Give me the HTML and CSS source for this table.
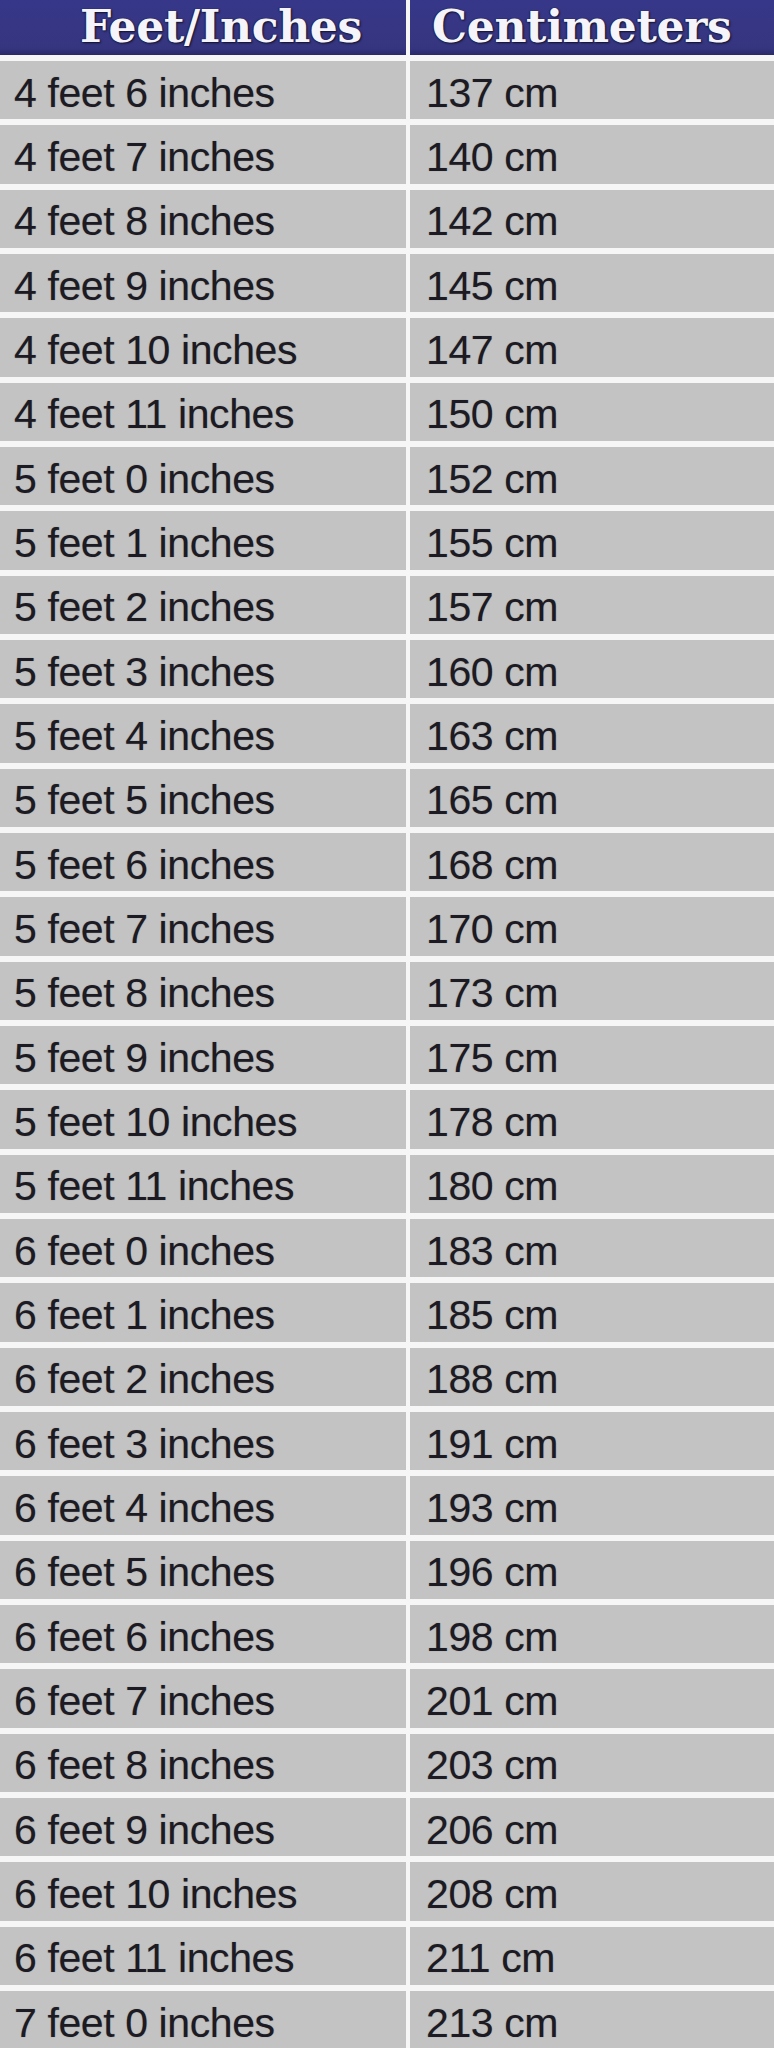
FILE: index.html
```html
<!DOCTYPE html>
<html lang="en">
<head>
<meta charset="utf-8">
<title>Height conversion chart</title>
<link rel="stylesheet" href="styles.css">
</head>
<body>
<div class="chart">
  <div class="head head-ft">Feet/Inches</div>
  <div class="head head-cm">Centimeters</div>
  <div class="cell ft">4 feet 6 inches</div><div class="cell cm">137 cm</div>
  <div class="cell ft">4 feet 7 inches</div><div class="cell cm">140 cm</div>
  <div class="cell ft">4 feet 8 inches</div><div class="cell cm">142 cm</div>
  <div class="cell ft">4 feet 9 inches</div><div class="cell cm">145 cm</div>
  <div class="cell ft">4 feet 10 inches</div><div class="cell cm">147 cm</div>
  <div class="cell ft">4 feet 11 inches</div><div class="cell cm">150 cm</div>
  <div class="cell ft">5 feet 0 inches</div><div class="cell cm">152 cm</div>
  <div class="cell ft">5 feet 1 inches</div><div class="cell cm">155 cm</div>
  <div class="cell ft">5 feet 2 inches</div><div class="cell cm">157 cm</div>
  <div class="cell ft">5 feet 3 inches</div><div class="cell cm">160 cm</div>
  <div class="cell ft">5 feet 4 inches</div><div class="cell cm">163 cm</div>
  <div class="cell ft">5 feet 5 inches</div><div class="cell cm">165 cm</div>
  <div class="cell ft">5 feet 6 inches</div><div class="cell cm">168 cm</div>
  <div class="cell ft">5 feet 7 inches</div><div class="cell cm">170 cm</div>
  <div class="cell ft">5 feet 8 inches</div><div class="cell cm">173 cm</div>
  <div class="cell ft">5 feet 9 inches</div><div class="cell cm">175 cm</div>
  <div class="cell ft">5 feet 10 inches</div><div class="cell cm">178 cm</div>
  <div class="cell ft">5 feet 11 inches</div><div class="cell cm">180 cm</div>
  <div class="cell ft">6 feet 0 inches</div><div class="cell cm">183 cm</div>
  <div class="cell ft">6 feet 1 inches</div><div class="cell cm">185 cm</div>
  <div class="cell ft">6 feet 2 inches</div><div class="cell cm">188 cm</div>
  <div class="cell ft">6 feet 3 inches</div><div class="cell cm">191 cm</div>
  <div class="cell ft">6 feet 4 inches</div><div class="cell cm">193 cm</div>
  <div class="cell ft">6 feet 5 inches</div><div class="cell cm">196 cm</div>
  <div class="cell ft">6 feet 6 inches</div><div class="cell cm">198 cm</div>
  <div class="cell ft">6 feet 7 inches</div><div class="cell cm">201 cm</div>
  <div class="cell ft">6 feet 8 inches</div><div class="cell cm">203 cm</div>
  <div class="cell ft">6 feet 9 inches</div><div class="cell cm">206 cm</div>
  <div class="cell ft">6 feet 10 inches</div><div class="cell cm">208 cm</div>
  <div class="cell ft">6 feet 11 inches</div><div class="cell cm">211 cm</div>
  <div class="cell ft">7 feet 0 inches</div><div class="cell cm">213 cm</div>
</div>
</body>
</html>
```

FILE: styles.css
```css
html, body {
  margin: 0;
  padding: 0;
  background: #f6f6f6;
}

.chart {
  display: grid;
  grid-template-columns: 406px 364px;
  grid-template-rows: 55px;
  grid-auto-rows: 58.33px;
  column-gap: 4px;
  row-gap: 6px;
  width: 774px;
  background: #f6f6f6;
}

.head {
  display: flex;
  align-items: center;
  background: linear-gradient(#37378a 0%, #35357f 88%, #29296a 100%);
  color: #f4f4fa;
  font-family: "DejaVu Serif", "Liberation Serif", serif;
  font-weight: bold;
  font-size: 44px;
  letter-spacing: -0.3px;
  text-shadow: 1px 1px 2px #10102a, -1px 0 1px #20204a;
  padding-bottom: 3px;
  box-sizing: border-box;
}

.head-ft {
  padding-left: 80px;
}

.head-cm {
  padding-left: 22px;
}

.cell {
  display: flex;
  align-items: center;
  background: #c3c3c3;
  color: #1c1a22;
  font-family: "Liberation Sans", Arial, sans-serif;
  font-size: 41px;
  letter-spacing: -0.4px;
  text-shadow: 0 0 1px rgba(30, 20, 40, 0.35);
  padding-top: 6px;
  box-sizing: border-box;
}

.ft {
  padding-left: 14px;
}

.cm {
  padding-left: 16px;
}
```
